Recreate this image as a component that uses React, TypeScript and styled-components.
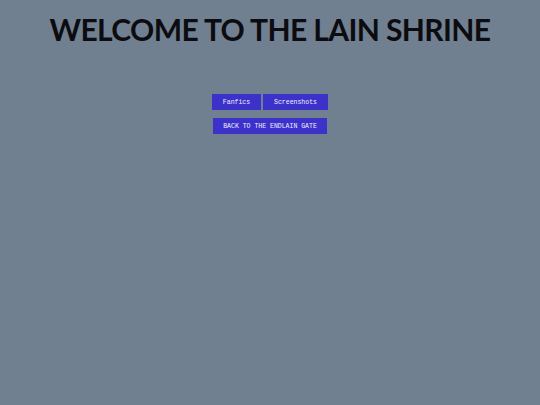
import React from 'react';
import styled, { createGlobalStyle } from 'styled-components';

const GlobalStyle = createGlobalStyle`
  body {
    margin: 0;
    background: #708090;
    font-family: "Liberation Mono", monospace;
  }
`;

const Page = styled.div`
  display: flex;
  flex-direction: column;
  align-items: center;
  min-height: 405px;
`;

const Title = styled.h1`
  margin: 12px 0 0;
  font-family: "Lato", "DejaVu Sans", sans-serif;
  font-weight: 700;
  font-size: 30px;
  letter-spacing: -0.6px;
  color: #0c0c10;
  line-height: 34px;
`;

const Nav = styled.div`
  display: flex;
  gap: 2px;
  margin-top: 48px;
`;

const Row = styled.div`
  display: flex;
  margin-top: 8px;
`;

const NavButton = styled.button<{ $w: number }>`
  width: ${(p) => p.$w}px;
  height: 16px;
  padding: 0;
  border: none;
  background: #3c32ca;
  color: #f0f0ff;
  font-family: "Liberation Mono", monospace;
  font-size: 6.5px;
  cursor: pointer;
`;

export default function App() {
  return (
    <Page>
      <GlobalStyle />
      <Title>WELCOME TO THE LAIN SHRINE</Title>
      <Nav>
        <NavButton $w={49}>Fanfics</NavButton>
        <NavButton $w={65}>Screenshots</NavButton>
      </Nav>
      <Row>
        <NavButton $w={114}>BACK TO THE ENDLAIN GATE</NavButton>
      </Row>
    </Page>
  );
}
